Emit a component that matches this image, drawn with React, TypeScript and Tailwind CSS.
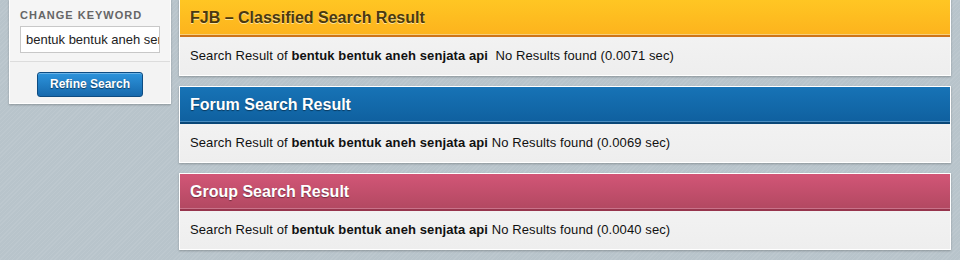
const KEYWORD = "bentuk bentuk aneh senjata api";

const RESULTS = [
  {
    title: "FJB – Classified Search Result",
    head: "bg-[linear-gradient(#ffc623,#fdb31d)] border-[#cf7418] text-[#4a3810] [text-shadow:0_1px_0_rgba(255,235,170,0.9)] shadow-[inset_0_-1px_0_#f6cf7c]",
    time: "0.0071",
    gap: "\u00a0 ",
  },
  {
    title: "Forum Search Result",
    head: "bg-[linear-gradient(#1773b6,#0f609f)] border-[#0a4777] text-white [text-shadow:0_1px_1px_rgba(0,0,0,0.45)] shadow-[inset_0_-1px_0_#4b8dc0]",
    time: "0.0069",
    gap: " ",
  },
  {
    title: "Group Search Result",
    head: "bg-[linear-gradient(#d25677,#b24861)] border-[#97354d] text-white [text-shadow:0_1px_1px_rgba(0,0,0,0.4)] shadow-[inset_0_-1px_0_#c9738a]",
    time: "0.0040",
    gap: " ",
  },
];

export default function App() {
  return (
    <div
      className="flex h-[260px] w-[960px] items-start overflow-hidden bg-[#b8c4cb] bg-[repeating-linear-gradient(135deg,rgba(255,255,255,0.07)_0px,rgba(255,255,255,0.07)_1px,transparent_1px,transparent_3px)]"
      style={{ fontFamily: '"Liberation Sans", Arial, sans-serif' }}
    >
      {/* sidebar */}
      <aside className="ml-[9px] -mt-px w-[162px] border border-white bg-[#f5f5f5] shadow-[0_1px_2px_rgba(0,0,0,0.25)]">
        <div className="px-[10px] pt-[10px] pb-2">
          <div className="text-[11px] font-bold uppercase leading-[11px] tracking-[1px] text-[#666]">
            Change Keyword
          </div>
          <div className="mt-[5px] h-[27px] w-[140px] overflow-hidden border border-[#c8c8c8] bg-white px-[5px] text-[13px] leading-[25px] whitespace-nowrap text-[#222]">
            {KEYWORD}
          </div>
        </div>
        <div className="border-t border-[#dcdcdc] bg-[#f3f3f3] pt-[9px] pb-[6px]">
          <button className="ml-[27px] h-[25px] w-[106px] rounded-[3px] border border-[#0d4c82] bg-[linear-gradient(#2d94dc,#1669ad)] text-[12px] font-bold text-white shadow-[inset_0_1px_0_rgba(255,255,255,0.3)] [text-shadow:0_1px_1px_rgba(0,0,0,0.5)]">
            Refine Search
          </button>
        </div>
      </aside>

      {/* results */}
      <main className="ml-[8px] -mt-px flex w-[772px] flex-col gap-[10px]">
        {RESULTS.map((r) => (
          <section key={r.title} className="border border-white bg-[#f0f0f0] shadow-[0_1px_2px_rgba(0,0,0,0.25)]">
            <h2 className={`h-[37px] border-b-2 pl-[10px] text-[16px] font-bold leading-[35px] ${r.head}`}>
              {r.title}
            </h2>
            <p className="h-[38px] bg-[linear-gradient(#f2f2f2,#eeeeee)] pl-[10px] text-[13px] leading-[37px] tracking-[0.1px] text-[#111]">
              Search Result of <b>{KEYWORD}</b>
              {r.gap}No Results found ({r.time} sec)
            </p>
          </section>
        ))}
      </main>
    </div>
  );
}
